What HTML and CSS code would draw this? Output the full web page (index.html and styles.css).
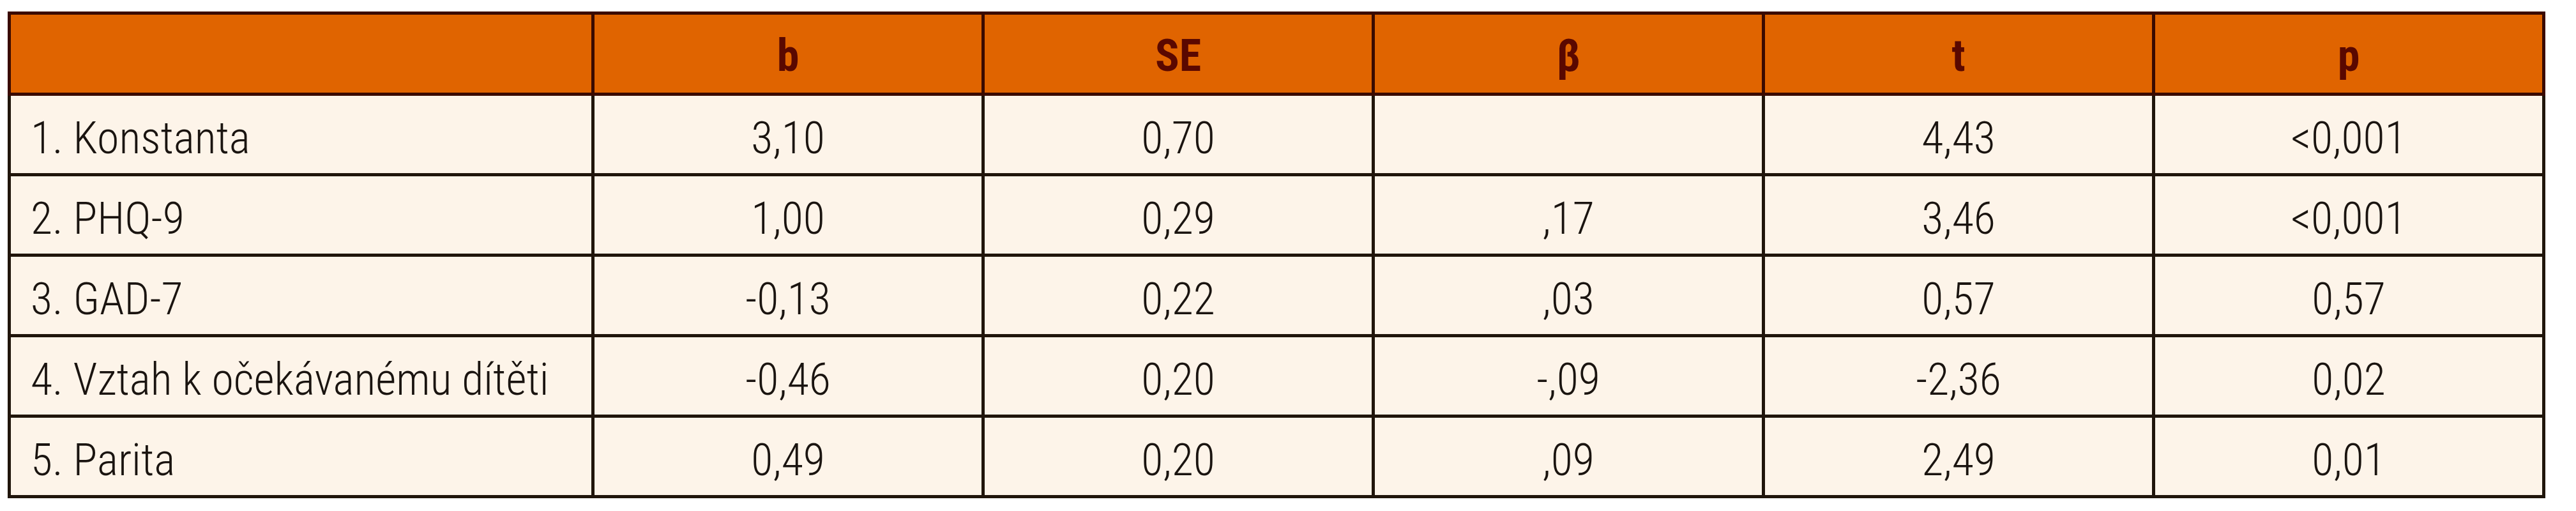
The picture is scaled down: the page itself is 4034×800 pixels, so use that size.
FILE: index.html
```html
<!DOCTYPE html>
<html lang="cs">
<head>
<meta charset="utf-8">
<title>Regrese</title>
<link rel="stylesheet" href="styles.css">
</head>
<body>
<table class="reg">
  <colgroup>
    <col class="c-label">
    <col class="c-num">
    <col class="c-num">
    <col class="c-num">
    <col class="c-num">
    <col class="c-num">
  </colgroup>
  <thead>
    <tr>
      <th></th>
      <th>b</th>
      <th>SE</th>
      <th>β</th>
      <th>t</th>
      <th>p</th>
    </tr>
  </thead>
  <tbody>
    <tr><td class="label">1. Konstanta</td><td>3,10</td><td>0,70</td><td></td><td>4,43</td><td>&lt;0,001</td></tr>
    <tr><td class="label">2. PHQ-9</td><td>1,00</td><td>0,29</td><td>,17</td><td>3,46</td><td>&lt;0,001</td></tr>
    <tr><td class="label">3. GAD-7</td><td>-0,13</td><td>0,22</td><td>,03</td><td>0,57</td><td>0,57</td></tr>
    <tr><td class="label">4. Vztah k očekávanému dítěti</td><td>-0,46</td><td>0,20</td><td>-,09</td><td>-2,36</td><td>0,02</td></tr>
    <tr><td class="label">5. Parita</td><td>0,49</td><td>0,20</td><td>,09</td><td>2,49</td><td>0,01</td></tr>
  </tbody>
</table>
</body>
</html>
```
FILE: styles.css
```css
html, body {
  margin: 0;
  padding: 0;
  background: #ffffff;
}

body {
  padding: 18px 0 0 12px;
  font-family: Roboto, "Liberation Sans", Arial, sans-serif;
  font-stretch: 87.5%;
}

.reg {
  border-collapse: collapse;
  table-layout: fixed;
  width: 3972px;
  font-size: 70px;
  font-weight: 300;
  color: #1a1410;
}

.c-label { width: 914px; }
.c-num { width: 611px; }

.reg th,
.reg td {
  border: 5px solid #20150b;
  padding: 0 8px;
  text-align: center;
  vertical-align: middle;
  white-space: nowrap;
  overflow: hidden;
}

.reg thead tr { height: 127px; }
.reg tbody tr { height: 126px; }

.reg th {
  background: #e06400;
  color: #5a0800;
  font-weight: 700;
  border-color: #3a0a00;
  padding-top: 6px;
}

.reg td {
  background: #fdf4e9;
  padding-top: 10px;
}

.reg td.label {
  text-align: left;
  padding-left: 31px;
}
```
